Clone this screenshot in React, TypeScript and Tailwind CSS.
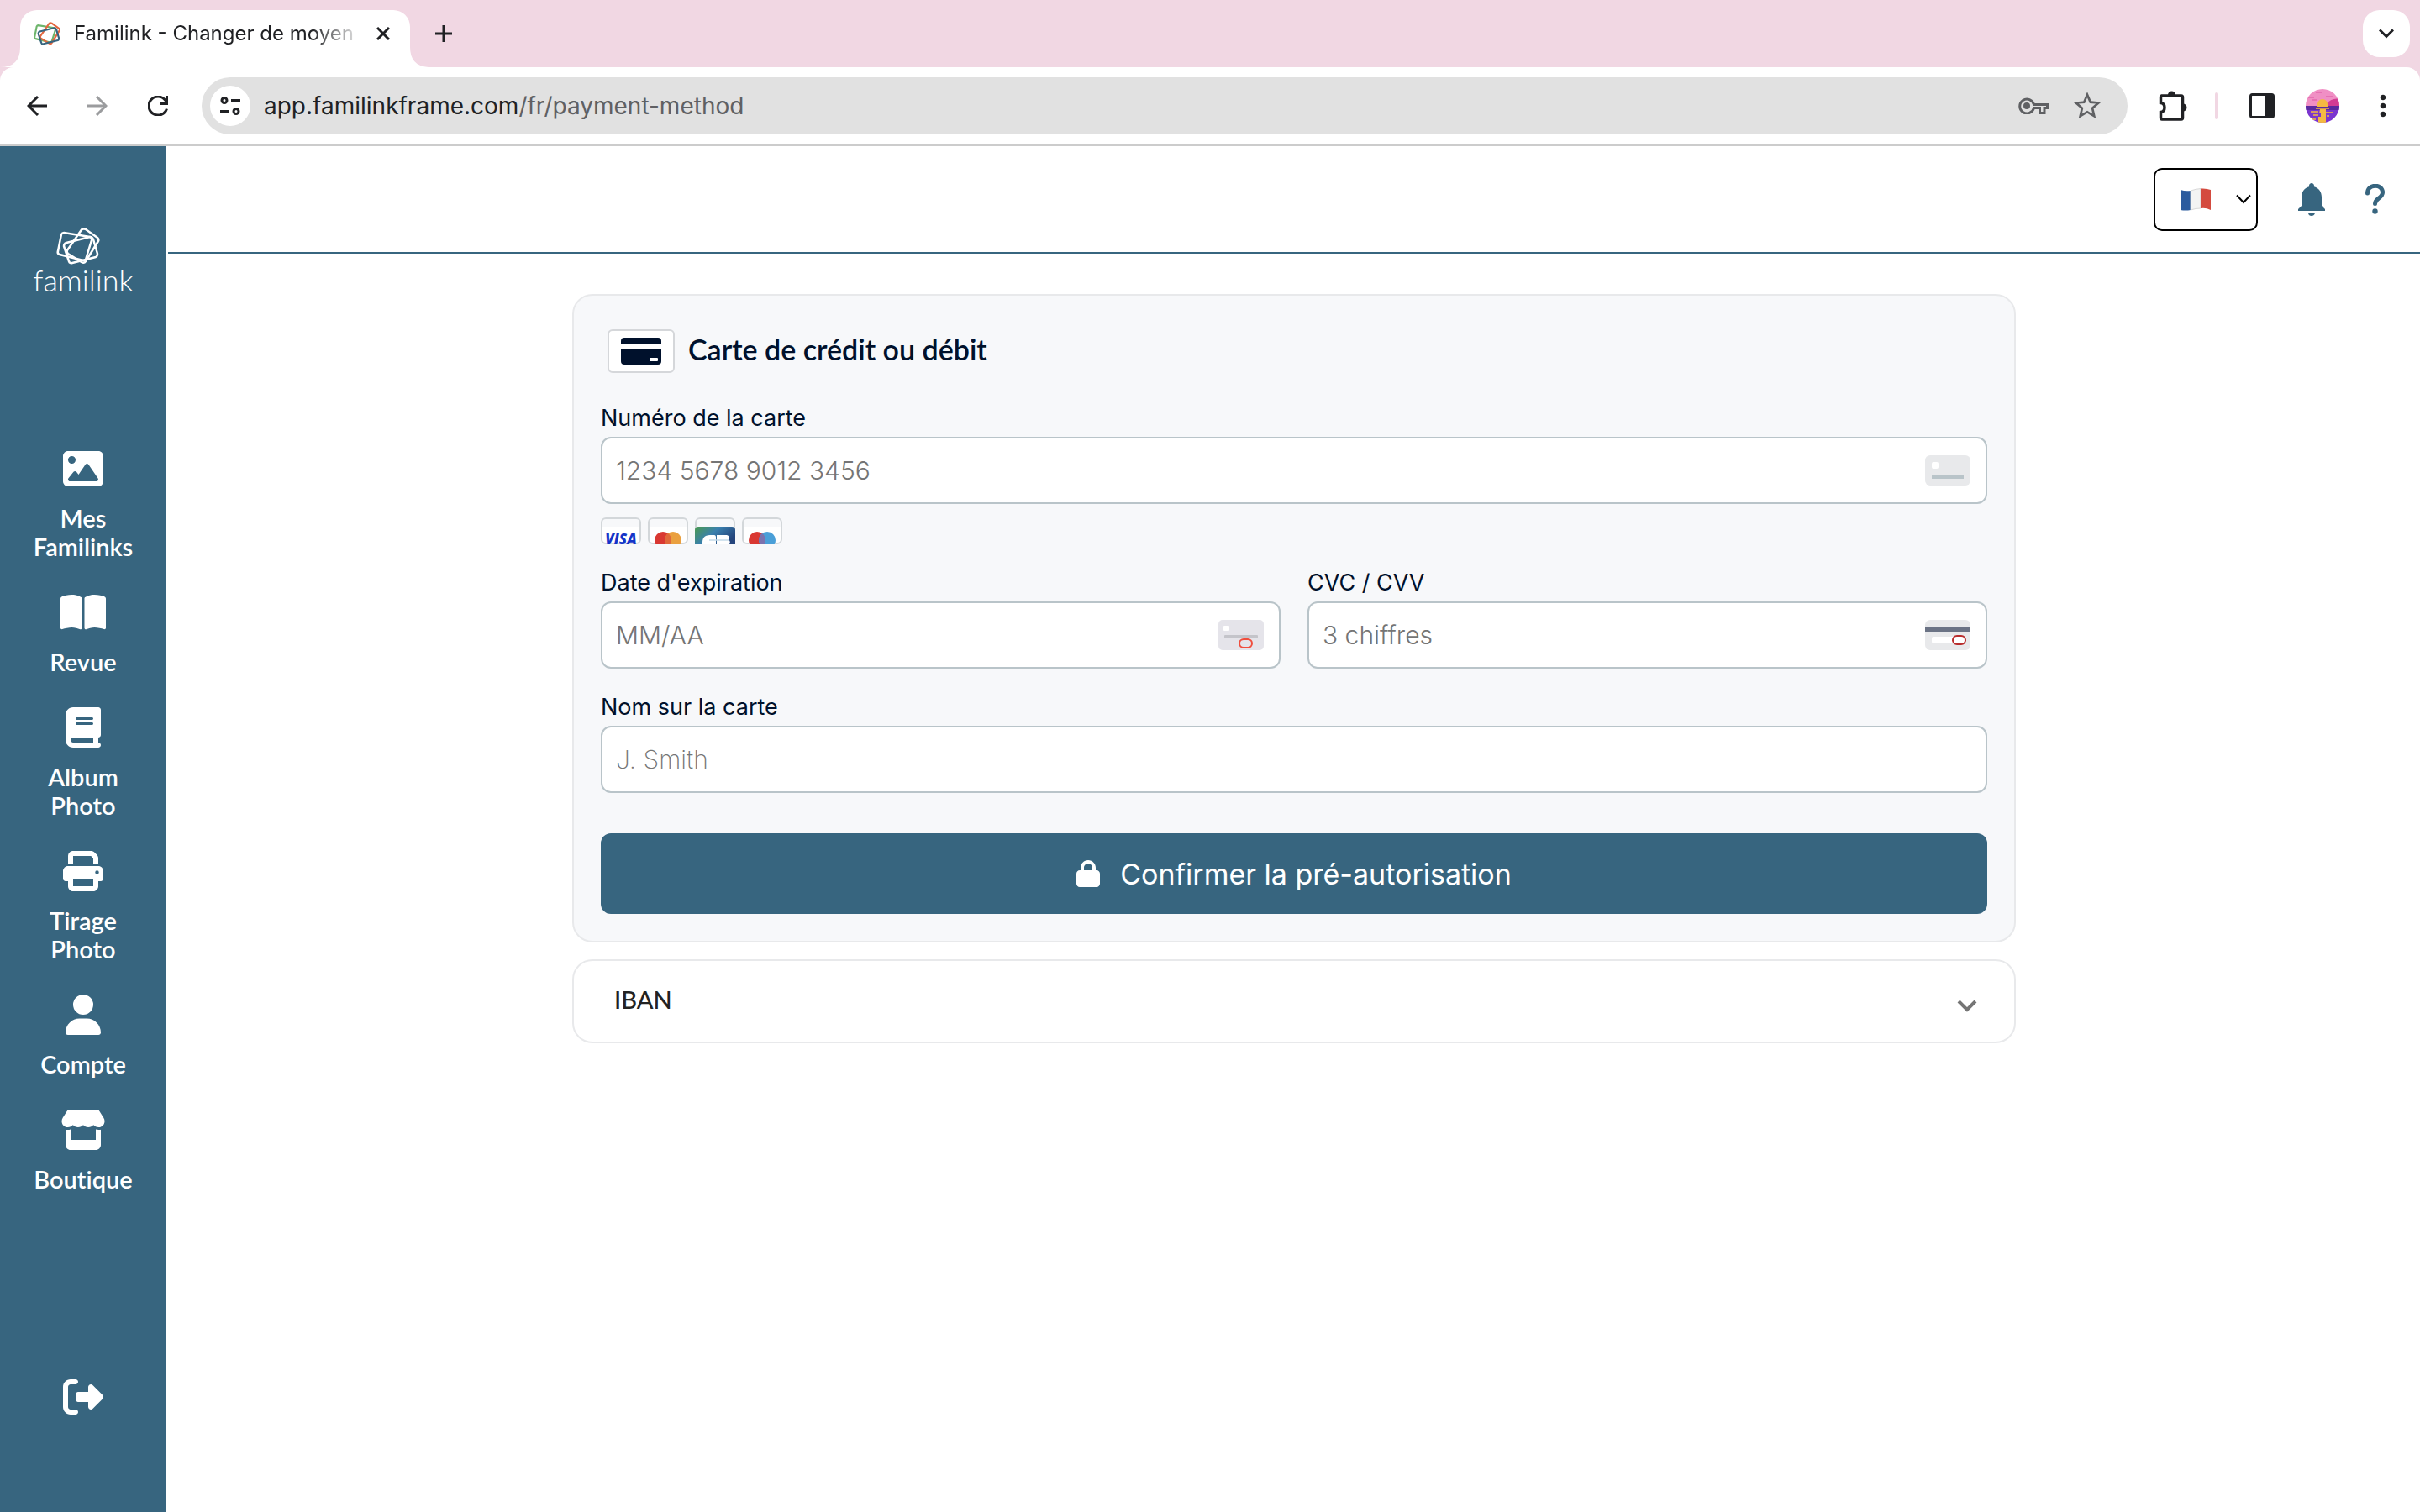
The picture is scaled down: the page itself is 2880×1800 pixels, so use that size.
import { useState } from "react";
import type { ReactNode } from "react";
import type { IconType } from "react-icons";
import {
  FaBook,
  FaBookOpen,
  FaImage,
  FaLock,
  FaPrint,
  FaRightFromBracket,
  FaStore,
  FaUser,
} from "react-icons/fa6";
import { MdMoreVert, MdNotifications, MdStarOutline } from "react-icons/md";

type LogoProps = {
  className: string;
  colors: string[];
  strokeWidth: number;
};
function LogoMark({ className, colors, strokeWidth }: LogoProps) {
  return (
    <svg
      viewBox="0 0 52 44"
      className={className}
      fill="none"
      strokeWidth={strokeWidth}
      strokeLinejoin="round"
    >
      <path
        d="M9 6L40 11Q43 12 42 15L35 38Q34 40 32 39L4 32Q1 31 2 28L6 8Q7 6 9 6Z"
        stroke={colors[0]}
      />
      <path
        d="M30 2.500Q32 0.500 35 2L49 12Q51 14 50 16L35 40Q33 43 30 41L14 31Q12 29 13 27Z"
        stroke={colors[1]}
      />
      <path
        d="M12 18L40 11Q43 11 44 14L49 31Q49 34 47 35L19 42Q16 43 15 40L9 22Q9 19 12 18Z"
        stroke={colors[2]}
      />
    </svg>
  );
}

function BrowserChrome() {
  return (
    <header className="bg-[#f1d7e3] font-['Inter',sans-serif]">
      <div className="flex h-20 items-end justify-between pl-6 pr-3">
        <div className="flex items-end">
          <div className="relative flex h-[68px] w-[464px] items-center rounded-t-[20px] bg-white pb-7 pl-4 pr-6 pt-4">
            <LogoMark
              className="h-[28px] w-[32px] shrink-0"
              colors={["#6db56b", "#e3673f", "#37657f"]}
              strokeWidth={3.5}
            />
            <span className="ml-4 w-[332px] overflow-hidden whitespace-nowrap bg-linear-to-r from-[#202124] from-85% to-[#20212433] bg-clip-text text-2xl text-transparent">
              Familink - Changer de moyen
            </span>
            <button type="button" aria-label="Fermer l'onglet" className="ml-auto">
              <svg viewBox="0 0 16 16" className="size-4" stroke="#202124" strokeWidth="3">
                <path d="M1 1L15 15M15 1L1 15" />
              </svg>
            </button>
            <svg viewBox="0 0 24 24" className="absolute -left-6 bottom-0 size-6" fill="white">
              <path d="M24 0V24H0Q24 24 24 0Z" />
            </svg>
            <svg viewBox="0 0 24 24" className="absolute -right-6 bottom-0 size-6" fill="white">
              <path d="M0 0V24H24Q0 24 0 0Z" />
            </svg>
          </div>
          <button type="button" aria-label="Nouvel onglet" className="mb-[29px] ml-[29px]">
            <svg viewBox="0 0 22 22" className="size-[22px]" stroke="#202124" strokeWidth="3">
              <path d="M11 1V21M1 11H21" />
            </svg>
          </button>
        </div>
        <button
          type="button"
          aria-label="Rechercher des onglets"
          className="mb-3 flex size-14 items-center justify-center rounded-[20px] bg-white"
        >
          <svg viewBox="0 0 18 12" className="h-3 w-[18px]" fill="none" stroke="#202124" strokeWidth="3">
            <path d="M1 1.500L9 9.500L17 1.500" />
          </svg>
        </button>
      </div>
      <div className="flex h-[94px] items-center rounded-t-2xl border-b-2 border-[#cccccc] bg-white px-6 text-[#202124]">
        <div className="flex gap-8">
          <button type="button" aria-label="Retour" className="p-2">
            <svg viewBox="0 0 24 24" className="size-6" fill="none" stroke="currentColor" strokeWidth="3">
              <path d="M24 12H3M13 1L2 12L13 23" />
            </svg>
          </button>
          <button type="button" aria-label="Avancer" className="p-2 text-[#9b9c9e]">
            <svg viewBox="0 0 24 24" className="size-6" fill="none" stroke="currentColor" strokeWidth="3">
              <path d="M0 12H21M11 1L22 12L11 23" />
            </svg>
          </button>
          <button type="button" aria-label="Actualiser" className="p-2">
            <svg viewBox="0 0 24 24" className="size-6" fill="none" stroke="currentColor" strokeWidth="3">
              <path d="M22.500 15.500A11 11 0 1 1 20.500 5L23 8" />
              <path d="M23.500 0V9.500H14" />
            </svg>
          </button>
        </div>
        <div className="ml-8 flex h-[68px] flex-1 items-center rounded-full bg-[#e1e1e1] pl-[10px] pr-7">
          <div className="flex size-12 items-center justify-center rounded-full bg-white">
            <svg viewBox="0 0 24 22" className="h-[22px] w-6" fill="none" stroke="#202124" strokeWidth="3">
              <circle cx="5" cy="4.500" r="3" />
              <path d="M13 4.500H24M0 17.500H11" />
              <circle cx="19" cy="17.500" r="3" />
            </svg>
          </div>
          <p className="ml-4 flex-1 text-[28px]">
            app.familinkframe.com<span className="text-[#5f6063]">/fr/payment-method</span>
          </p>
          <div className="flex items-center gap-[26px] text-[#5f6063]">
            <svg viewBox="0 0 36 20" className="h-5 w-9" fill="none" stroke="currentColor" strokeWidth="3">
              <path d="M18.500 8.500H34.500V12.500H31V18.500H25.500V12.500H18.500A8.500 8.500 0 1 1 18.500 8.500Z" />
              <circle cx="10" cy="10" r="4" fill="currentColor" stroke="none" />
            </svg>
            <MdStarOutline className="size-10" />
          </div>
        </div>
        <div className="ml-[37px] flex items-center">
          <svg viewBox="0 0 34 38" className="h-[38px] w-[34px]">
            <path
              d="M3 7H27Q28.500 7 28.500 9V33Q28.500 35 27 35H4Q2.500 35 2.500 33V26.500Q7 26 7 21T2.500 15.500V9Q2.500 7 4 7Z"
              fill="none"
              stroke="currentColor"
              strokeWidth="3.500"
            />
            <path d="M11 6a4.500 4.500 0 0 1 9 0ZM29 16.500a4.500 4.500 0 0 1 0 9Z" fill="currentColor" />
          </svg>
          <div className="ml-[33px] h-8 w-1 rounded-full bg-[#f1d7e3]" />
          <svg viewBox="0 0 30 30" className="ml-[37px] size-[30px]">
            <rect x="1.500" y="1.500" width="27" height="27" rx="2" fill="none" stroke="#202124" strokeWidth="3" />
            <path d="M18 2H28V28H18Z" fill="#202124" />
          </svg>
          <Avatar />
          <MdMoreVert className="ml-8 size-10" />
        </div>
      </div>
    </header>
  );
}

function Avatar() {
  return (
    <svg viewBox="0 0 40 40" className="ml-[37px] size-10 rounded-full">
      <path d="M0 0H40V21H0Z" fill="#f08fc4" />
      <path d="M12 4H19M3 10H10M24 9H33M8 13H14" stroke="#e268ad" strokeWidth="1.500" />
      <path d="M24 18Q32 10 40 12V21H22Z" fill="#d33c93" />
      <path d="M0 20H40V40H0Z" fill="#7b35cf" />
      <path d="M0 20H40V25H0Z" fill="#5b2a9f" />
      <path d="M14 21V18a6 6 0 0 1 12 0V21Z" fill="#f4b942" />
      <path d="M17 24H24V40H15V33H18V29H16Z" fill="#f4b942" />
      <path d="M12 23H28M6 27H15M24 28H32M9 31H15M25 32H28M8 36H12" stroke="#f4b942" strokeWidth="1.500" />
    </svg>
  );
}

const navItems: { icon: IconType; lines: string[] }[] = [
  { icon: FaImage, lines: ["Mes", "Familinks"] },
  { icon: FaBookOpen, lines: ["Revue"] },
  { icon: FaBook, lines: ["Album", "Photo"] },
  { icon: FaPrint, lines: ["Tirage", "Photo"] },
  { icon: FaUser, lines: ["Compte"] },
  { icon: FaStore, lines: ["Boutique"] },
];

function Sidebar() {
  return (
    <aside className="flex w-[198px] shrink-0 flex-col items-center bg-[#37657f] pb-[113px] pt-[97px] text-white">
      <a href="#" className="flex flex-col items-center">
        <LogoMark className="mr-3 h-[44px] w-[52px]" colors={["white", "white", "white"]} strokeWidth={2.5} />
        <span className="text-4xl font-light leading-9">familink</span>
      </a>
      <nav className="mt-[183px]">
        <ul>
          {navItems.map(({ icon: Icon, lines }) => (
            <li key={lines.join(" ")}>
              <a
                href="#"
                className="flex flex-col items-center pb-[37px] text-center text-[29px] font-semibold leading-[34px] [font-variant-ligatures:none]"
              >
                <Icon className="mb-[18px] h-12 w-[54px]" />
                {lines.map((line) => (
                  <span key={line}>{line}</span>
                ))}
              </a>
            </li>
          ))}
        </ul>
      </nav>
      <button type="button" aria-label="Se déconnecter" className="mt-auto">
        <FaRightFromBracket className="size-12" />
      </button>
    </aside>
  );
}

function TopBar() {
  const [lang, setLang] = useState("fr");

  return (
    <div className="flex h-32 items-center justify-end border-b-2 border-[#37657f] pr-[42px] text-[#37657f]">
      <div className="relative">
        <select
          aria-label="Langue"
          value={lang}
          onChange={(e) => setLang(e.target.value)}
          className="block h-[75px] w-[124px] appearance-none rounded-[10px] border-2 border-black bg-white"
        >
          <option value="fr" aria-label="Français"></option>
        </select>
        <div className="pointer-events-none absolute inset-0 flex items-center justify-between pl-8 pr-2">
          <svg viewBox="0 0 36 28" className="h-7 w-9">
            <path d="M0 3Q6 5 12 4V27Q6 28 0 27Z" fill="#2b5b9e" />
            <path d="M12 4Q18 2 24 1.500V25Q18 25 12 27Z" fill="#f3f3f3" stroke="#cfcfcf" strokeWidth="0.800" />
            <path d="M24 1.500Q31 1 36 3V27Q30 24 24 25Z" fill="#d44b3f" />
          </svg>
          <svg viewBox="0 0 18 12" className="h-3 w-[18px]" fill="none" stroke="black" strokeWidth="2">
            <path d="M1 1.500L9 10L17 1.500" />
          </svg>
        </div>
      </div>
      <button type="button" aria-label="Notifications" className="ml-10">
        <MdNotifications className="size-12" />
      </button>
      <button type="button" aria-label="Aide" className="ml-10">
        <svg viewBox="0 0 23 36" className="h-9 w-[23px]" fill="none" stroke="currentColor" strokeWidth="5" strokeLinecap="round">
          <path d="M2.500 11C2.500 -0.500 20.500 -0.500 20.500 10C20.500 17 11.500 17 11.500 23.500" />
          <circle cx="11.500" cy="32.500" r="3.200" fill="currentColor" stroke="none" />
        </svg>
      </button>
    </div>
  );
}

type FieldProps = {
  id: string;
  label: string;
  placeholder: string;
  weight?: string;
  icon?: ReactNode;
};
function Field({ id, label, placeholder, weight = "font-light", icon }: FieldProps) {
  return (
    <div className="flex-1">
      <label htmlFor={id} className="mb-2 block text-[27px] leading-7 text-[#00112c]">
        {label}
      </label>
      <div className="flex h-20 items-center rounded-xl border-2 border-[#b9c4c9] bg-white pl-4 pr-[18px]">
        <input
          id={id}
          type="text"
          placeholder={placeholder}
          className={`h-full min-w-0 flex-1 text-[30px] outline-none placeholder:text-[#757575] ${weight}`}
        />
        {icon}
      </div>
    </div>
  );
}

function NumberIcon() {
  return (
    <svg viewBox="0 0 54 36" className="h-9 w-[54px]">
      <rect width="54" height="36" rx="6" fill="#e8e9eb" />
      <rect x="8" y="8" width="8" height="8" rx="2" fill="white" />
      <path d="M8 24H46V28H8Z" fill="#b9c4c9" />
    </svg>
  );
}

function ExpiryIcon() {
  return (
    <svg viewBox="0 0 54 36" className="h-9 w-[54px]">
      <rect width="54" height="36" rx="5" fill="#e5e4ea" />
      <rect x="6" y="7" width="7" height="6" rx="1" fill="white" />
      <rect x="7" y="18" width="40" height="4" rx="1" fill="#c4c4ca" />
      <rect x="25" y="23" width="15" height="10" rx="5" fill="#e5e4ea" stroke="#f04e3e" strokeWidth="2" />
    </svg>
  );
}

function CvcIcon() {
  return (
    <svg viewBox="0 0 54 36" className="h-9 w-[54px]">
      <rect width="54" height="36" rx="6" fill="#e8e9eb" />
      <path d="M0 8H54V14H0Z" fill="#6b7385" />
      <rect x="8" y="20" width="30" height="8" rx="2" fill="white" />
      <rect x="33" y="19" width="15" height="10" rx="5" fill="white" stroke="#b82c2c" strokeWidth="2" />
    </svg>
  );
}

function BrandCard({ children }: { children: ReactNode }) {
  return (
    <svg viewBox="0 0 48 32" className="h-8 w-12">
      <rect x="1" y="1" width="46" height="30" rx="5" fill="#f7f8fa" />
      <path d="M1 11H47V26Q47 31 42 31H6Q1 31 1 26Z" fill="white" />
      <rect x="1" y="1" width="46" height="30" rx="5" fill="none" stroke="#d3d7da" strokeWidth="2" />
      {children}
    </svg>
  );
}

function Brands() {
  return (
    <div className="mb-8 mt-4 flex gap-2">
      <BrandCard>
        <text
          x="24"
          y="32"
          textAnchor="middle"
          fontSize="17"
          fontWeight="800"
          fontStyle="italic"
          fontFamily="Open Sans, sans-serif"
          fill="#1434c8"
        >
          VISA
        </text>
      </BrandCard>
      <BrandCard>
        <circle cx="18" cy="27" r="10" fill="#d93832" />
        <circle cx="30" cy="27" r="10" fill="#eaa03f" />
        <path d="M24 19a10 10 0 0 1 0 16a10 10 0 0 1 0-16Z" fill="#e0683a" />
      </BrandCard>
      <BrandCard>
        <defs>
          <linearGradient id="cb" x1="0" y1="0" x2="1" y2="0.500">
            <stop offset="0" stopColor="#4b9a4f" />
            <stop offset="0.500" stopColor="#3a80ae" />
            <stop offset="1" stopColor="#25457c" />
          </linearGradient>
        </defs>
        <path d="M0 32V15Q0 11 4 11H44Q48 11 48 15V32Z" fill="url(#cb)" />
        <path d="M9 32Q8 21 18 21H23Q25 21 25 24V32Z" fill="white" />
        <path d="M26 21H38Q42 22 40 26Q43 29 41 32H26Z" fill="white" />
        <path d="M17 27H40" stroke="#c3dae8" strokeWidth="1.500" />
      </BrandCard>
      <BrandCard>
        <circle cx="18" cy="27" r="10" fill="#d93832" />
        <circle cx="30" cy="27" r="10" fill="#4a9fd8" />
        <path d="M24 19a10 10 0 0 1 0 16a10 10 0 0 1 0-16Z" fill="#7b72ae" />
      </BrandCard>
    </div>
  );
}

function PaymentForm() {
  return (
    <form
      onSubmit={(e) => e.preventDefault()}
      className="rounded-3xl border-2 border-[#e8e9eb] bg-[#f7f8fa] px-8 pb-8 pt-10 font-['Inter',sans-serif]"
    >
      <div className="mb-10 flex items-center pl-2">
        <div className="flex h-[52px] w-20 items-center justify-center rounded-md border-2 border-[#d5d7da] bg-white">
          <svg viewBox="0 0 48 32" className="h-8 w-12">
            <path d="M4 0H44Q48 0 48 4V8H0V4Q0 0 4 0Z" fill="#00112c" />
            <path d="M0 14H48V28Q48 32 44 32H4Q0 32 0 28Z" fill="#00112c" />
            <rect x="34" y="24" width="10" height="4" rx="1" fill="white" />
          </svg>
        </div>
        <h2 className="ml-4 pb-1 font-['Lato',sans-serif] text-[34px] font-semibold leading-10 text-[#00112c]">
          Carte de crédit ou débit
        </h2>
      </div>
      <Field id="card-number" label="Numéro de la carte" placeholder="1234 5678 9012 3456" icon={<NumberIcon />} />
      <Brands />
      <div className="mb-8 flex gap-8">
        <Field id="expiry" label="Date d'expiration" placeholder="MM/AA" icon={<ExpiryIcon />} />
        <Field id="cvc" label="CVC / CVV" placeholder="3 chiffres" icon={<CvcIcon />} />
      </div>
      <Field id="holder" label="Nom sur la carte" placeholder="J. Smith" weight="font-extralight" />
      <button
        type="submit"
        className="mt-12 flex h-24 w-full items-center justify-center gap-6 rounded-xl bg-[#37657f] text-[34px] text-white"
      >
        <FaLock className="h-8 w-7" />
        Confirmer la pré-autorisation
      </button>
    </form>
  );
}

function App() {
  return (
    <div className="flex min-h-screen flex-col bg-white font-['Lato',sans-serif]">
      <BrowserChrome />
      <div className="flex flex-1 gap-0.5">
        <Sidebar />
        <main className="min-w-0 flex-1">
          <TopBar />
          <div className="mx-auto mt-12 w-full max-w-[1718px]">
            <PaymentForm />
            <button
              type="button"
              className="mt-5 flex h-[100px] w-full items-center justify-between rounded-3xl border-2 border-[#e8e9eb] pb-1 pl-12 pr-11 text-[29px] font-medium text-[#222222]"
            >
              IBAN
              <svg viewBox="0 0 24 16" className="mt-4 h-4 w-6" fill="none" stroke="#757575" strokeWidth="4">
                <path d="M2 2L12 12L22 2" />
              </svg>
            </button>
          </div>
        </main>
      </div>
    </div>
  );
}
export default App;
